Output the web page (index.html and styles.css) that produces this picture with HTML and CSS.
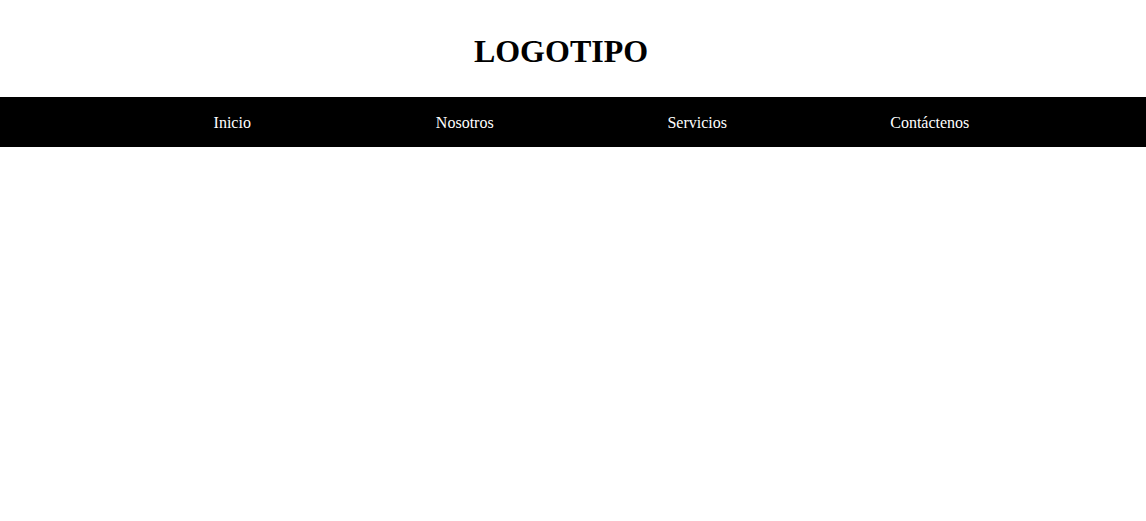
FILE: index.html
```html
<!DOCTYPE html>
<html lang="es">
<head>
<meta charset="utf-8">
<title>Logotipo</title>
<link rel="stylesheet" href="styles.css">
</head>
<body>
<header class="site-header">
  <h1 class="logo">LOGOTIPO</h1>
</header>
<nav class="main-nav">
  <ul class="nav-list">
    <li class="nav-item"><a href="#" class="nav-link">Inicio</a></li>
    <li class="nav-item"><a href="#" class="nav-link">Nosotros</a></li>
    <li class="nav-item"><a href="#" class="nav-link">Servicios</a></li>
    <li class="nav-item"><a href="#" class="nav-link">Contáctenos</a></li>
  </ul>
</nav>
</body>
</html>
```
FILE: styles.css
```css
html, body {
  margin: 0;
  padding: 0;
  background: #fff;
  font-family: "Liberation Serif", "Times New Roman", serif;
}

.site-header {
  box-sizing: border-box;
  height: 97px;
  padding: 33px 24px 0 0;
  text-align: center;
}

.logo {
  margin: 0;
  font-size: 32px;
  font-weight: bold;
  line-height: normal;
  color: #000;
}

.main-nav {
  box-sizing: border-box;
  height: 50px;
  background: #000;
  padding: 0 100px 0 116px;
}

.nav-list {
  list-style: none;
  margin: 0;
  padding: 0;
  display: flex;
  height: 100%;
}

.nav-item {
  flex: 1;
  text-align: center;
  padding-top: 17px;
  font-size: 16px;
  line-height: normal;
}

.nav-link {
  color: #fff;
  text-decoration: none;
}
```
